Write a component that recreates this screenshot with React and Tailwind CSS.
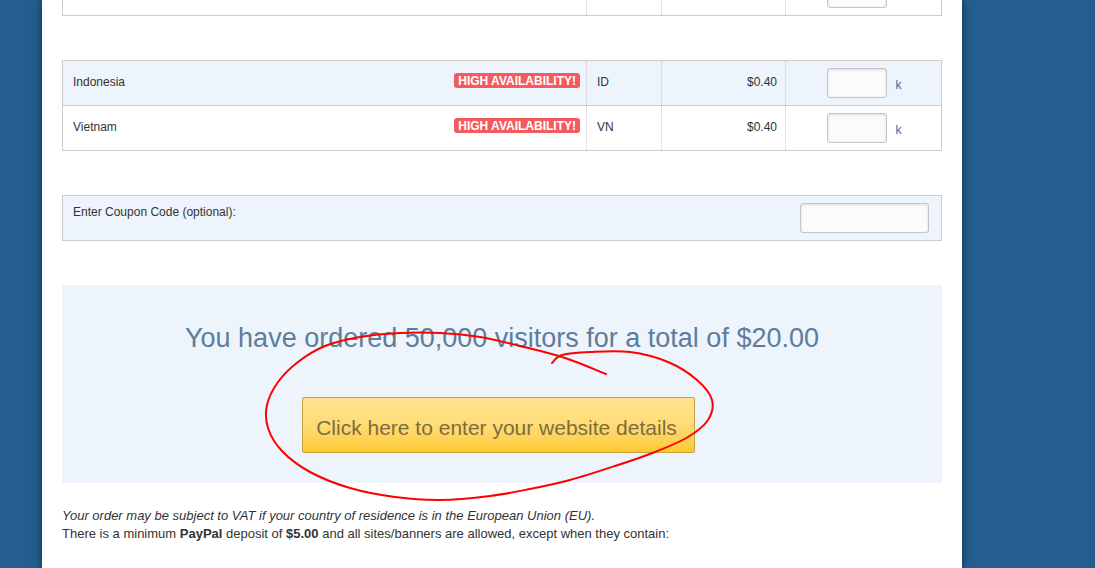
import React from 'react';

const font = { fontFamily: '"Liberation Sans", Arial, sans-serif' };

const curvePath = (pts) => {
    let d = `M ${pts[0][0]} ${pts[0][1]}`;
    for (let i = 0; i < pts.length - 1; i++) {
        const p0 = pts[i - 1] || pts[i];
        const p1 = pts[i];
        const p2 = pts[i + 1];
        const p3 = pts[i + 2] || p2;
        const c1 = [p1[0] + (p2[0] - p0[0]) / 6, p1[1] + (p2[1] - p0[1]) / 6];
        const c2 = [p2[0] - (p3[0] - p1[0]) / 6, p2[1] - (p3[1] - p1[1]) / 6];
        d += ` C ${c1[0]} ${c1[1]} ${c2[0]} ${c2[1]} ${p2[0]} ${p2[1]}`;
    }
    return d;
};

const scribble = [
    [552, 363], [562, 355], [590, 352], [630, 352], [668, 362], [697, 380], [712, 400],
    [708, 420], [688, 437], [655, 452], [615, 466], [570, 480], [530, 489], [490, 496],
    [440, 500], [395, 497], [350, 488], [310, 472], [282, 451], [268, 428], [267, 405],
    [278, 382], [298, 362], [325, 346], [360, 337], [400, 333], [440, 333], [480, 337],
    [520, 346], [565, 358], [606, 374]
];

const QtyInput = ({ w = 'w-[60px]' }) => (
    <input className={`${w} h-[30px] rounded-[3px] border border-[#c4c4c4] bg-[#fbfbfb] shadow-[inset_0_1px_3px_rgba(0,0,0,0.12)] outline-none`} />
);

const Badge = () => (
    <span className="-mt-[5px] inline-flex h-[15px] items-center rounded-[3px] bg-[#f25c61] px-[4px] text-[12px] font-bold leading-none text-white">
        HIGH AVAILABILITY!
    </span>
);

const CountryRow = ({ name, code, price, shaded, badge = true, unit = 'k', last }) => (
    <div className={`flex ${shaded ? 'bg-[#edf4fb]' : 'bg-white'} ${last ? 'h-[44px]' : 'h-[45px] border-b border-[#cccccc]'}`}>
        <div className="flex w-[523px] items-center justify-between pl-[10px] pr-[6px]">
            <span className="mt-[-2px]">{name}</span>
            {badge && <Badge />}
        </div>
        <div className="flex w-[75px] items-center border-l border-dotted border-[#c8c8c8] pl-[10px]">
            <span className="mt-[-2px]">{code}</span>
        </div>
        <div className="flex w-[124px] items-center justify-end border-l border-dotted border-[#c8c8c8] pr-[8px]">
            <span className="mt-[-2px]">{price}</span>
        </div>
        <div className="flex flex-1 items-center justify-center gap-[9px] border-l border-dotted border-[#c8c8c8] pl-[1px]">
            <QtyInput />
            <span className="mt-[3px] w-[6px] text-[#2f6ea5]">{unit}</span>
        </div>
    </div>
);

export default function App() {
    return (
        <div className="relative h-[568px] overflow-hidden bg-[#245d8f] text-[12px] text-[#333333]" style={font}>
            <div className="ml-[42px] flow-root h-full w-[920px] bg-white px-[20px] shadow-[0_0_8px_rgba(0,0,0,0.55)]">
                <div className="-mt-[30px] border border-[#cccccc]">
                    <CountryRow name="" code="" price="" badge={false} unit="" last />
                </div>

                <div className="mt-[44px] border border-[#cccccc]">
                    <CountryRow name="Indonesia" code="ID" price="$0.40" shaded />
                    <CountryRow name="Vietnam" code="VN" price="$0.40" last />
                </div>

                <div className="mt-[44px] flex h-[46px] items-start justify-between border border-[#cccccc] bg-[#edf4fb] pl-[10px] pr-[12px]">
                    <span className="mt-[7px]">Enter Coupon Code (optional):</span>
                    <QtyInput w="mt-[7px] w-[129px]" />
                </div>

                <div className="mt-[44px] flex h-[198px] flex-col items-center bg-[#edf4fb] pt-[37px]">
                    <div className="text-[27px] leading-[32px] text-[#5e7d9c]">
                        You have ordered 50,000 visitors for a total of $20.00
                    </div>
                    <button
                        type="button"
                        className="mr-[7px] mt-[43px] h-[56px] w-[393px] rounded-[2px] border border-[#c4a23e] bg-gradient-to-b from-[#ffe38f] via-[#fedc76] to-[#fec92b] pr-[4px] pt-[5px] text-[21px] text-[#7d6d3c]"
                        style={font}
                    >
                        Click here to enter your website details
                    </button>
                </div>

                <div className="mt-[24px] text-[13px] leading-[18px]">
                    <div className="italic">Your order may be subject to VAT if your country of residence is in the European Union (EU).</div>
                    <div>
                        There is a minimum <b>PayPal</b> deposit of <b>$5.00</b> and all sites/banners are allowed, except when they contain:
                    </div>
                </div>
            </div>

            <svg className="pointer-events-none absolute left-0 top-0" width="1095" height="568">
                <path d={curvePath(scribble)} fill="none" stroke="#ff0000" strokeWidth="2" strokeLinecap="round" strokeLinejoin="round" />
            </svg>
        </div>
    );
}
